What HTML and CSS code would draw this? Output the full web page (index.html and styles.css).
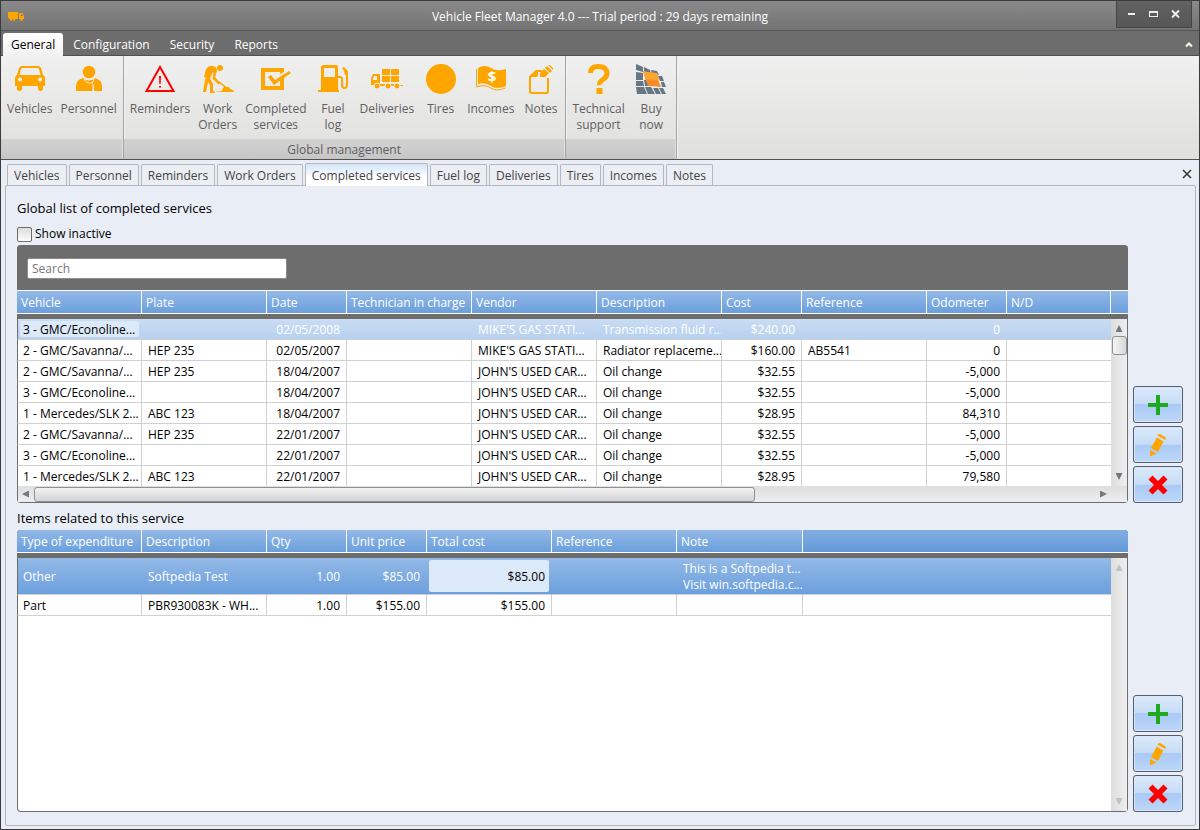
FILE: index.html
```html
<!DOCTYPE html>
<html lang="en">
<head>
    <meta charset="UTF-8">
    <meta name="viewport" content="width=device-width, initial-scale=1.0">
    <title>Vehicle Fleet Manager 4.0</title>
    <link rel="stylesheet" href="styles.css">
</head>
<body>
    <!-- Shared icons -->
    <svg class="icon-defs" aria-hidden="true">
        <symbol id="icon-add" viewBox="0 0 20 20">
            <path fill="#1ea91e" d="M8 0h4v8h8v4h-8v8H8v-8H0V8h8z"/>
        </symbol>
        <symbol id="icon-edit" viewBox="0 0 20 24">
            <path fill="#ffa500" d="M10 1.500Q11 .5 12.500 1.200L17 4Q18.500 5 17.500 7L9.500 2.800zM8.800 4.500L15.500 8.500L10 19L3 15zM2 17L8.500 20.500L2 23.500z"/>
        </symbol>
        <symbol id="icon-delete" viewBox="0 0 20 20">
            <path fill="#f00" d="M4.500 .5L10 6L15.500 .5L19.500 4.500L14 10L19.500 15.500L15.500 19.500L10 14L4.500 19.500L.5 15.500L6 10L.5 4.500z"/>
        </symbol>
    </svg>

    <div class="window">
        <header class="titlebar">
            <svg class="app-icon" viewBox="0 0 16 10" aria-hidden="true">
                <path fill="#ffa500" d="M0 1h10v6H0zM11 2h3.500l1.500 3v3h-5zM1 7h9v1H1z"/>
                <path fill="#7d7d7d" d="M13 3h1l1 2h-2z"/>
                <circle cx="3" cy="8.500" r="1.200" fill="#ffa500"/><circle cx="6" cy="8.500" r="1.200" fill="#ffa500"/><circle cx="13.500" cy="8.500" r="1.200" fill="#ffa500"/>
            </svg>
            <h1 class="window-title">Vehicle Fleet Manager 4.0 --- Trial period : 29 days remaining</h1>
            <div class="window-buttons">
                <button type="button" aria-label="Minimize"><svg viewBox="0 0 10 10"><path fill="#eee" d="M1 4h7v2H1z"/></svg></button>
                <button type="button" aria-label="Maximize"><svg viewBox="0 0 10 10"><path fill="#eee" fill-rule="evenodd" d="M0 2h9v6H0zM1 4v3h7V4z"/></svg></button>
                <button type="button" aria-label="Close"><svg viewBox="0 0 10 10"><path stroke="#eee" stroke-width="2" d="M1 1.500l7 7M8 1.500l-7 7"/></svg></button>
            </div>
        </header>

        <nav class="menu">
            <button type="button" class="menu-item active">General</button>
            <button type="button" class="menu-item">Configuration</button>
            <button type="button" class="menu-item">Security</button>
            <button type="button" class="menu-item">Reports</button>
            <button type="button" class="menu-collapse" aria-label="Collapse ribbon"><svg viewBox="0 0 8 6"><path fill="none" stroke="#fff8e0" stroke-width="2" d="M1 4.500l3-3 3 3"/></svg></button>
        </nav>

        <section class="ribbon">
            <div class="ribbon-group">
                <div class="ribbon-items">
                    <button type="button" class="ribbon-button">
                        <svg viewBox="0 0 32 32"><path fill="#ffa500" fill-rule="evenodd" d="M8 3h16q2 0 3 2l2 7q2 1 2 3v8h-2v3q0 2-2.500 2T24 26v-3H8v3q0 2-2.500 2T3 26v-3H1v-8q0-2 2-3l2-7q1-2 3-2zM8.500 5Q7.500 5 7 6l-1.500 6h21L25 6q-.5-1-1.500-1zM6 14.500a2 2 0 1 0 .1 0zM26 14.500a2 2 0 1 0 .1 0z"/></svg>
                        <span>Vehicles</span>
                    </button>
                    <button type="button" class="ribbon-button">
                        <svg viewBox="0 0 32 32"><circle cx="16" cy="9" r="6.300" fill="#ffa500"/><path fill="#ffa500" d="M3 28V23q0-6 7-8q6 5 12 0q7 2 7 8v5H21v-5h-1v5z"/><path fill="none" stroke="#eee" d="M11 15q1 6 9 5M21 15q0 3-2 5M20 21v7"/></svg>
                        <span>Personnel</span>
                    </button>
                </div>
                <div class="ribbon-caption"></div>
            </div>
            <div class="ribbon-group">
                <div class="ribbon-items">
                    <button type="button" class="ribbon-button">
                        <svg viewBox="0 0 32 32"><path fill="none" stroke="#f00" stroke-width="2" d="M16 4L29.500 28H2.500z"/><path fill="#f00" d="M15 13h2l-.4 8h-1.200zM15.200 23h1.700v1.800h-1.700z"/></svg>
                        <span>Reminders</span>
                    </button>
                    <button type="button" class="ribbon-button">
                        <svg viewBox="0 0 32 32"><circle cx="18" cy="5" r="3" fill="#ffa500"/><path fill="#ffa500" d="M4 6q3-4 7-3q4 1 4 5l-2 6 5 6-1.500 1.500-6-6 1-6-1 0-2.500 6L11 21v7l2 1v1H8v-8l-2-3-2 10H1l2-12 3-7-2 5-2-1zM17 18L27 26l-1 1-10-8zM13 29l7-1q1-5 4-4 3-1 4 2 4 1 4 3z"/></svg>
                        <span>Work<br>Orders</span>
                    </button>
                    <button type="button" class="ribbon-button">
                        <svg viewBox="0 0 32 32"><path fill="#ffa500" d="M1 5h23v4l-4 2V9H5v14h15v-6l4-3v13H1z"/><path fill="#ffa500" d="M8 14l3-2 4 5L29 8l2 2-17 12z"/></svg>
                        <span>Completed<br>services</span>
                    </button>
                    <button type="button" class="ribbon-button">
                        <svg viewBox="0 0 32 32"><path fill="#ffa500" fill-rule="evenodd" d="M5 3q0-1 1-1h13q2 0 2 2v23h1v2H1v-2h3V3zM7 5v9h11V5z"/><path fill="none" stroke="#ffa500" stroke-width="2" d="M21 14h2q2 0 2 2v6q0 3 2.500 3t2.500-3V9"/><path fill="#ffa500" d="M25 5l2-1 4 4v4h-3l-1-4z"/></svg>
                        <span>Fuel<br>log</span>
                    </button>
                    <button type="button" class="ribbon-button">
                        <svg viewBox="0 0 32 32"><path fill="#ffa500" fill-rule="evenodd" d="M2 11h7v11H0v-7zM3 13l-1.500 4H6v-4zM11 6h8v6h-8zM20 6h8v6h-8zM11 13h8v6h-8zM20 13h8v6h-8zM9 21h19v1h4v1H9z"/><g fill="#ffa500" stroke="#eee"><circle cx="6" cy="23" r="3"/><circle cx="17" cy="23" r="3"/><circle cx="26" cy="23" r="3"/></g></svg>
                        <span>Deliveries</span>
                    </button>
                    <button type="button" class="ribbon-button">
                        <svg viewBox="0 0 32 32"><circle cx="16" cy="16" r="15" fill="#ffa500"/></svg>
                        <span>Tires</span>
                    </button>
                    <button type="button" class="ribbon-button">
                        <svg viewBox="0 0 32 32"><path fill="#ffa500" d="M3 5q7-4 13 0t15 1v17q-9 4-15 0T3 21z"/><path fill="none" stroke="#ffa500" d="M1.500 6v18q8-3 14 1t15 0"/><text x="17" y="19" class="money-sign">$</text></svg>
                        <span>Incomes</span>
                    </button>
                    <button type="button" class="ribbon-button">
                        <svg viewBox="0 0 32 32"><path fill="none" stroke="#ffa500" stroke-width="2" d="M17 8H11L5 14v14q0 2 2 2h14q2 0 2-2V15"/><path fill="#ffa500" d="M5 14h6q2 0 2-2V7zM15 10l4-4 5 4-4 4h-5zM20 5l2-2 5 5-2 2zM23 2h2l3 3v2z"/></svg>
                        <span>Notes</span>
                    </button>
                </div>
                <div class="ribbon-caption">Global management</div>
            </div>
            <div class="ribbon-group">
                <div class="ribbon-items">
                    <button type="button" class="ribbon-button">
                        <svg viewBox="0 0 32 32"><path fill="none" stroke="#ffa500" stroke-width="5" d="M7.500 10q0-6.500 8-6.500t8.500 6.500q0 4-4 6.500t-3.500 5.500"/><path fill="#ffa500" d="M13.500 25h6v6h-6z"/></svg>
                        <span>Technical<br>support</span>
                    </button>
                    <button type="button" class="ribbon-button">
                        <svg viewBox="0 0 32 32"><path fill="#647782" d="M1 1l7 3v5L1 7zM9 4l6 3 1 4-7-2zM16 7l6 1 2 4-7-1zM1 9l7 1v7H1zM1 18h7l1 5H1zM1 24h8l3 7H2zM10 24h6l4 7h-7zM18 25h5l3 6h-5zM24 25h4l3 6h-4zM9 17h2l3 6h-4zM23 13h4l2 5h-4zM26 19h3l2 5h-4z"/><path fill="#f68b28" d="M8 8q7 2 14 2 1 8 4 14-7-1-13-1-3-7-5-15z"/><path fill="#ffa72c" d="M8 8q7 2 14 2l2 7q-7 0-13-1z"/></svg>
                        <span>Buy<br>now</span>
                    </button>
                </div>
                <div class="ribbon-caption"></div>
            </div>
        </section>

        <div class="tab-bar">
            <button type="button" class="tab">Vehicles</button>
            <button type="button" class="tab">Personnel</button>
            <button type="button" class="tab">Reminders</button>
            <button type="button" class="tab">Work Orders</button>
            <button type="button" class="tab active">Completed services</button>
            <button type="button" class="tab">Fuel log</button>
            <button type="button" class="tab">Deliveries</button>
            <button type="button" class="tab">Tires</button>
            <button type="button" class="tab">Incomes</button>
            <button type="button" class="tab">Notes</button>
            <button type="button" class="tab-close" aria-label="Close tab"><svg viewBox="0 0 10 10"><path stroke="#333" stroke-width="1.500" d="M1 1l8 8M9 1l-8 8"/></svg></button>
        </div>

        <main class="panel">
            <h2 class="panel-title">Global list of completed services</h2>
            <div class="filter">
                <input type="checkbox" id="showInactive">
                <label for="showInactive">Show inactive</label>
            </div>

            <section class="list">
                <div class="grid-box services">
                    <div class="search-bar">
                        <input type="text" class="search" placeholder="Search" aria-label="Search">
                    </div>
                    <div class="grid">
                        <div class="grid-body">
                            <table>
                                <colgroup>
                                    <col class="w125"><col class="w125"><col class="w80"><col class="w125"><col class="w125"><col class="w125"><col class="w80"><col class="w125"><col class="w80"><col>
                                </colgroup>
                                <thead>
                                    <tr><th>Vehicle</th><th>Plate</th><th>Date</th><th>Technician in charge</th><th>Vendor</th><th>Description</th><th>Cost</th><th>Reference</th><th>Odometer</th><th>N/D</th></tr>
                                </thead>
                                <tbody>
                                    <tr class="selected-light"><td class="focused"><span>3 - GMC/Econoline...</span></td><td></td><td class="num">02/05/2008</td><td></td><td>MIKE'S GAS STATI...</td><td>Transmission fluid r...</td><td class="num">$240.00</td><td></td><td class="num">0</td><td></td></tr>
                                    <tr><td>2 - GMC/Savanna/...</td><td>HEP 235</td><td class="num">02/05/2007</td><td></td><td>MIKE'S GAS STATI...</td><td>Radiator replaceme...</td><td class="num">$160.00</td><td>AB5541</td><td class="num">0</td><td></td></tr>
                                    <tr><td>2 - GMC/Savanna/...</td><td>HEP 235</td><td class="num">18/04/2007</td><td></td><td>JOHN'S USED CAR...</td><td>Oil change</td><td class="num">$32.55</td><td></td><td class="num">-5,000</td><td></td></tr>
                                    <tr><td>3 - GMC/Econoline...</td><td></td><td class="num">18/04/2007</td><td></td><td>JOHN'S USED CAR...</td><td>Oil change</td><td class="num">$32.55</td><td></td><td class="num">-5,000</td><td></td></tr>
                                    <tr><td>1 - Mercedes/SLK 2...</td><td>ABC 123</td><td class="num">18/04/2007</td><td></td><td>JOHN'S USED CAR...</td><td>Oil change</td><td class="num">$28.95</td><td></td><td class="num">84,310</td><td></td></tr>
                                    <tr><td>2 - GMC/Savanna/...</td><td>HEP 235</td><td class="num">22/01/2007</td><td></td><td>JOHN'S USED CAR...</td><td>Oil change</td><td class="num">$32.55</td><td></td><td class="num">-5,000</td><td></td></tr>
                                    <tr><td>3 - GMC/Econoline...</td><td></td><td class="num">22/01/2007</td><td></td><td>JOHN'S USED CAR...</td><td>Oil change</td><td class="num">$32.55</td><td></td><td class="num">-5,000</td><td></td></tr>
                                    <tr><td>1 - Mercedes/SLK 2...</td><td>ABC 123</td><td class="num">22/01/2007</td><td></td><td>JOHN'S USED CAR...</td><td>Oil change</td><td class="num">$28.95</td><td></td><td class="num">79,580</td><td></td></tr>
                                </tbody>
                            </table>
                            <div class="watermark" aria-hidden="true">SOFTPEDIA<small>www.softpedia.com</small></div>
                        </div>
                        <div class="grid-side">
                            <div class="head-filler"></div>
                            <div class="scroll-v">
                                <span class="arrow up"></span>
                                <span class="thumb-v"></span>
                                <span class="arrow down"></span>
                            </div>
                        </div>
                    </div>
                    <div class="scroll-h">
                        <span class="arrow left"></span>
                        <div class="track-h"><span class="thumb-h"></span></div>
                        <span class="arrow right"></span>
                    </div>
                </div>
                <div class="actions">
                    <button type="button" aria-label="Add service"><svg class="icon"><use href="#icon-add"/></svg></button>
                    <button type="button" aria-label="Edit service"><svg class="icon-tall"><use href="#icon-edit"/></svg></button>
                    <button type="button" aria-label="Delete service"><svg class="icon"><use href="#icon-delete"/></svg></button>
                </div>
            </section>

            <h2 class="panel-title">Items related to this service</h2>
            <section class="list items">
                <div class="grid-box">
                    <div class="grid">
                        <div class="grid-body">
                            <table>
                                <colgroup>
                                    <col class="w125"><col class="w125"><col class="w80"><col class="w80"><col class="w125"><col class="w125"><col class="w126"><col>
                                </colgroup>
                                <thead>
                                    <tr><th>Type of expenditure</th><th>Description</th><th>Qty</th><th>Unit price</th><th>Total cost</th><th>Reference</th><th>Note</th><th class="rest"></th></tr>
                                </thead>
                                <tbody>
                                    <tr class="selected"><td>Other</td><td>Softpedia Test</td><td class="num">1.00</td><td class="num">$85.00</td><td class="num focused"><span>$85.00</span></td><td></td><td>This is a Softpedia t...<br>Visit win.softpedia.c...</td><td></td></tr>
                                    <tr><td>Part</td><td>PBR930083K - WH...</td><td class="num">1.00</td><td class="num">$155.00</td><td class="num">$155.00</td><td></td><td></td><td></td></tr>
                                </tbody>
                            </table>
                        </div>
                        <div class="grid-side">
                            <div class="head-filler rest"></div>
                            <div class="scroll-v disabled">
                                <span class="arrow up"></span>
                                <span class="arrow down"></span>
                            </div>
                        </div>
                    </div>
                </div>
                <div class="actions">
                    <button type="button" aria-label="Add item"><svg class="icon"><use href="#icon-add"/></svg></button>
                    <button type="button" aria-label="Edit item"><svg class="icon-tall"><use href="#icon-edit"/></svg></button>
                    <button type="button" aria-label="Delete item"><svg class="icon"><use href="#icon-delete"/></svg></button>
                </div>
            </section>
        </main>
    </div>
</body>
</html>
```
FILE: styles.css
```css
* {
    box-sizing: border-box;
}
body {
    margin: 0;
    font-family: "Segoe UI", "Open Sans", "Noto Sans", sans-serif;
    font-size: 12px;
    line-height: 16px;
    color: #000;
}
button, input {
    font: inherit;
    color: inherit;
    margin: 0;
}
button {
    padding: 0;
    border: none;
    background: none;
    cursor: pointer;
}
.icon-defs {
    display: none;
}
.window {
    display: flex;
    flex-direction: column;
    min-height: 100vh;
    border: 1px solid #3b3b3f;
    background-color: #e9edf5;
}

/* Title bar */
.titlebar {
    display: grid;
    grid-template-columns: 1fr auto 1fr;
    align-items: center;
    height: 30px;
    padding: 0 7px;
    background: linear-gradient(#8a8a8a, #737373);
    border-bottom: 1px solid #565656;
    color: #fff;
}
.app-icon {
    width: 16px;
    height: 10px;
}
.window-title {
    margin: 0;
    padding-top: 2px;
    font-size: 12px;
    font-weight: normal;
}
.window-buttons {
    display: flex;
    justify-content: space-around;
    justify-self: end;
    align-self: start;
    width: 76px;
    height: 27px;
    padding: 2px 4px 0;
    background: linear-gradient(#626262, #565656);
    border: 1px solid #454545;
    border-top: none;
}
.window-buttons button {
    width: 22px;
}
.window-buttons svg {
    width: 10px;
    height: 10px;
}

/* Menu */
.menu {
    display: flex;
    align-items: flex-end;
    height: 25px;
    padding: 0 2px;
    background-color: #6d6d6d;
    box-shadow: inset 0 -1px #505050;
    color: #fff;
}
.menu-item {
    height: 23px;
    padding: 0 10px;
}
.menu-item.active {
    padding: 0 8px;
    border-radius: 3px 3px 0 0;
    background: linear-gradient(#fff, #f2f2f2);
    color: #000;
}
.menu-collapse {
    align-self: center;
    margin-left: auto;
    padding: 0 4px;
}
.menu-collapse svg {
    width: 8px;
    height: 6px;
}

/* Ribbon */
.ribbon {
    display: flex;
    height: 104px;
    background: linear-gradient(#f0f0f0, #dfdfdc);
    border-bottom: 1px solid #505050;
    color: #5f5f5f;
}
.ribbon-group {
    display: flex;
    flex-direction: column;
    border-right: 1px solid #a3a3a3;
    box-shadow: 1px 0 #f4f4f4;
}
.ribbon-items {
    display: flex;
    align-items: flex-start;
    flex: 1;
    padding: 7px 2px 0;
}
.ribbon-button {
    display: flex;
    flex-direction: column;
    align-items: center;
    gap: 6px;
    min-width: 45px;
    padding: 0 4px;
}
.ribbon-button svg {
    width: 32px;
    height: 32px;
}
.money-sign {
    font-size: 15px;
    font-weight: bold;
    text-anchor: middle;
    fill: #fff;
}
.ribbon-caption {
    height: 20px;
    margin-right: 1px;
    padding-top: 3px;
    background: linear-gradient(#d3d3d3, #c6c6c6);
    text-align: center;
}

/* Document tabs */
.tab-bar {
    display: flex;
    align-items: flex-end;
    gap: 2px;
    height: 25px;
    padding: 0 6px;
}
.tab {
    height: 21px;
    padding: 2px 6px 0;
    border: 1px solid #b4b7bd;
    border-bottom: none;
    border-radius: 2px 2px 0 0;
    background-color: #ebeef3;
    color: #444;
}
.tab.active {
    z-index: 1;
    height: 23px;
    margin-bottom: -1px;
    background: linear-gradient(#d3e5fb, #fff 60%);
}
.tab-close {
    margin-left: auto;
    padding: 0 1px 6px;
}
.tab-close svg {
    display: block;
    width: 10px;
    height: 10px;
}

/* Panel */
.panel {
    display: flex;
    flex-direction: column;
    flex: 1;
    margin: 0 3px 3px 4px;
    padding: 12px 12px 13px 11px;
    border: 1px solid #b4b7bd;
    border-radius: 2px;
}
.panel-title {
    margin: 0;
    font-size: 13px;
    font-weight: normal;
    line-height: 20px;
}
.filter {
    display: flex;
    align-items: center;
    gap: 3px;
    height: 16px;
    margin: 8px 0 3px;
}
.filter input {
    appearance: none;
    width: 15px;
    height: 15px;
    border: 1px solid #6d6d6d;
    border-radius: 2px;
    background: linear-gradient(#dcdcdc, #fdfdfd);
}
.filter + .list {
    margin-bottom: 5px;
}
.list {
    display: flex;
    align-items: stretch;
    gap: 5px;
}
.items {
    flex: 1;
    margin-top: 2px;
}
.grid-box {
    display: flex;
    flex-direction: column;
    flex: 1;
    min-width: 0;
    overflow: hidden;
    border-radius: 4px;
    background-color: #fff;
    box-shadow: inset 0 0 0 1px #6d6d6d;
}
.search-bar {
    height: 46px;
    padding: 13px 10px;
    background-color: #6d6d6d;
    border-bottom: 1px solid #fff;
}
.search {
    display: block;
    width: 260px;
    height: 21px;
    padding: 0 4px;
    border: 1px solid #8c8c8c;
    border-radius: 2px;
    background-color: #fff;
}
.search::placeholder {
    color: #777;
    opacity: 1;
}
.grid {
    display: flex;
    flex: 1;
}
.grid-body {
    position: relative;
    flex: 1;
    min-width: 0;
}
.grid-side {
    display: flex;
    flex-direction: column;
    width: 17px;
}
table {
    width: 100%;
    table-layout: fixed;
    border-collapse: separate;
    border-spacing: 0;
}
.w80 {
    width: 80px;
}
.w125 {
    width: 125px;
}
.w126 {
    width: 126px;
}
th, .head-filler {
    height: 28px;
    padding: 0 4px 5px;
    background:
        linear-gradient(#fff, #fff) right top / 1px 22px no-repeat,
        linear-gradient(#93b9e6, #6b9fdd) left top / 100% 22px no-repeat,
        linear-gradient(#fff, #fff) left 22px / 100% 1px no-repeat,
        #6d6d6d;
    color: #fff;
    font-weight: normal;
    text-align: left;
    white-space: nowrap;
}
.head-filler {
    background:
        linear-gradient(#93b9e6, #6b9fdd) left top / 100% 22px no-repeat,
        linear-gradient(#fff, #fff) left 22px / 100% 1px no-repeat,
        #6d6d6d;
}
.rest {
    background:
        linear-gradient(#82afe2, #6398d8) left top / 100% 22px no-repeat,
        linear-gradient(#fff, #fff) left 22px / 100% 1px no-repeat,
        #6d6d6d;
}
td {
    height: 21px;
    padding: 3px 6px 1px;
    border-right: 1px solid #d0d0d0;
    border-bottom: 1px solid #d0d0d0;
    overflow: hidden;
    white-space: nowrap;
}
td:first-child {
    padding-left: 5px;
    border-left: 1px solid #6d6d6d;
}
td:last-child {
    border-right: none;
}
.services tbody tr:last-child td {
    height: 20px;
    border-bottom: none;
}
.num {
    text-align: right;
}
.selected-light {
    background: linear-gradient(#cbdcf3, #b5d0ef);
    color: #fff;
}
.selected {
    background: linear-gradient(#93b9e6, #6b9fdd);
    color: #fff;
}
.selected td {
    height: 37px;
}
.selected td, .selected-light td {
    border-right-color: transparent;
}
.focused span {
    display: block;
    border-radius: 2px;
    background-color: #dce9f8;
    color: #000;
}
.selected-light .focused {
    padding: 2px;
}
.selected-light .focused span {
    padding: 1px 3px 0;
    line-height: 15px;
}
.selected .focused {
    padding: 2px;
}
.selected .focused span {
    padding: 9px 4px 7px;
}
.watermark {
    position: absolute;
    top: 72px;
    left: 462px;
    font-size: 19px;
    line-height: 20px;
    text-align: center;
    color: rgba(120, 120, 140, 0.15);
    pointer-events: none;
}
.watermark small {
    display: block;
    font-size: 10px;
    line-height: 12px;
}

/* Scroll bars */
.scroll-v {
    display: flex;
    flex-direction: column;
    align-items: center;
    flex: 1;
    gap: 4px;
    margin-right: 1px;
    padding: 6px 0;
    background: linear-gradient(to right, #dedede, #eee);
}
.items .scroll-v {
    margin-bottom: 1px;
}
.scroll-h {
    display: flex;
    align-items: center;
    gap: 5px;
    height: 16px;
    margin: 0 1px 1px;
    padding: 0 20px 0 4px;
    background: linear-gradient(#dedede, #eee);
}
.track-h {
    flex: 1;
}
.thumb-v {
    width: 15px;
    height: 19px;
    border: 1px solid #8f9195;
    border-radius: 3px;
    background: linear-gradient(to right, #f6f6f6, #d6d6d6);
}
.thumb-h {
    display: block;
    width: 68%;
    height: 15px;
    border: 1px solid #8f9195;
    border-radius: 3px;
    background: linear-gradient(#f3f3f3, #d3d3d3);
}
.arrow {
    width: 7px;
    height: 7px;
    background-color: #737780;
}
.up {
    clip-path: polygon(50% 0, 100% 100%, 0 100%);
}
.down {
    margin-top: auto;
    clip-path: polygon(0 0, 100% 0, 50% 100%);
}
.left {
    clip-path: polygon(0 50%, 100% 0, 100% 100%);
}
.right {
    clip-path: polygon(0 0, 100% 50%, 0 100%);
}
.disabled .arrow {
    background-color: #bfc1c4;
}

/* Add / edit / delete */
.actions {
    display: flex;
    flex-direction: column;
    justify-content: flex-end;
    gap: 3px;
}
.actions button {
    display: flex;
    align-items: center;
    justify-content: center;
    width: 50px;
    height: 37px;
    border: 1px solid #555c6b;
    border-radius: 3px;
    background: linear-gradient(#dcebfb, #c5dbf5 50%, #a9c9f6 50%, #bcd7f8);
    box-shadow: inset 0 0 0 1px #d8e8fa;
}
.icon {
    width: 20px;
    height: 20px;
}
.icon-tall {
    width: 20px;
    height: 24px;
}
```
